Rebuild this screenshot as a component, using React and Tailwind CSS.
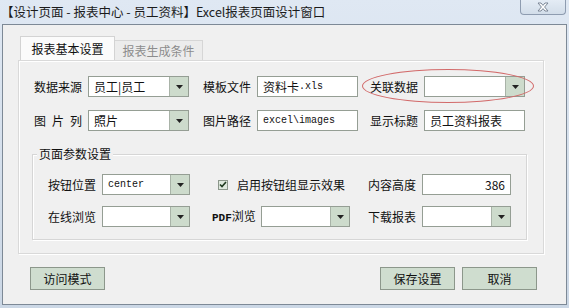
import React from 'react'

const cjk = { fontFamily: '"Noto Sans CJK SC", "Noto Sans", sans-serif' }
const mono = { fontFamily: '"Liberation Mono", "Noto Sans CJK SC", monospace' }

function Arrow() {
  return (
    <div className="w-[19px] h-full bg-[#cddbcc] border-l border-[#a9b3a8] flex items-center justify-center">
      <svg width="7" height="4" viewBox="0 0 7 4"><path d="M0 0h7L3.5 4z" fill="#222" /></svg>
    </div>
  )
}

function Combo({ w, children, monoText }) {
  return (
    <div className="h-[21px] bg-white border border-[#959e94] flex items-stretch" style={{ width: w }}>
      <div className={`flex-1 flex items-center pl-[5px] text-[#111] ${monoText ? 'text-[10px]' : 'text-[12px]'}`} style={monoText ? mono : cjk}>
        {children}
      </div>
      <Arrow />
    </div>
  )
}

function Field({ w, children, right, monoText }) {
  return (
    <div className={`h-[21px] bg-white border border-[#959e94] flex items-center px-[5px] text-[#111] ${right ? 'justify-end' : ''} ${monoText ? 'text-[10px]' : 'text-[12px]'}`} style={{ width: w, ...(monoText ? mono : cjk) }}>
      {children}
    </div>
  )
}

function Label({ w = 54, children }) {
  return <div className="text-[12px] text-[#111] shrink-0" style={{ width: w, ...cjk }}>{children}</div>
}

function Btn({ children }) {
  return (
    <button className="w-[75px] h-[23px] bg-[#cfddcf] border border-[#8c978b] text-[12px] text-[#111] flex items-center justify-center" style={cjk}>
      {children}
    </button>
  )
}

export default function App() {
  return (
    <div className="w-[569px] h-[308px] bg-gradient-to-b from-[#dfe8f3] to-[#cbd7e5] overflow-hidden" style={cjk}>
      {/* title bar */}
      <div className="h-[24px] flex items-start justify-between">
        <div className="text-[12.5px] text-[#1b1b1b] pl-[1px] pt-[3px] whitespace-nowrap">
          【设计页面 - 报表中心 - 员工资料】Excel报表页面设计窗口
        </div>
        <div className="w-[46px] h-[15px] mr-[3px] border border-t-0 border-[#8e9cb0] rounded-b-[4px] bg-gradient-to-b from-[#e4ecf5] to-[#d2dde9] flex items-center justify-center">
          <svg width="12" height="10" viewBox="0 0 12 10">
            <path d="M1 1h3l2 2.4L8 1h3L7.6 5 11 9H8L6 6.6 4 9H1l3.4-4z" fill="#fff" stroke="#6f7c8c" strokeWidth="0.9" />
          </svg>
        </div>
      </div>

      {/* window body */}
      <div className="mx-[2px] h-[281px] bg-[#f0f0f0] border border-[#7d8996] pt-[12px]">
        {/* tabs */}
        <div className="flex items-end ml-[17px] h-[23px] relative z-10">
          <div className="w-[95px] h-[24px] bg-[#fbfbfb] border border-[#d3d3d3] border-b-0 flex items-center justify-center text-[12px] text-[#111]">
            报表基本设置
          </div>
          <div className="w-[88px] h-[20px] bg-[#ececec] border border-[#d6d6d6] border-b-0 border-l-0 flex items-center justify-center text-[12px] text-[#8c8c8c]">
            报表生成条件
          </div>
        </div>

        {/* panel */}
        <div className="ml-[15px] w-[526px] h-[194px] border border-[#d9d9d9] bg-[#f0f0f0] shadow-[inset_1px_1px_0_#fff,1px_1px_0_#fff] pt-[15px] pl-[15px]">
          <div className="flex items-center h-[21px]">
            <Label>数据来源</Label>
            <Combo w={101}>员工|员工</Combo>
            <div className="w-[14px]" />
            <Label>模板文件</Label>
            <Field w={101}>资料卡<span className="text-[10px]" style={mono}>.xls</span></Field>
            <div className="w-[12px]" />
            <div className="relative flex items-center">
              <div className="absolute left-[-8px] top-[-7px] w-[172px] h-[34px] rounded-[50%] border border-[#d26a6a] pointer-events-none" />
              <Label>关联数据</Label>
              <Combo w={101}></Combo>
            </div>
          </div>

          <div className="flex items-center h-[21px] mt-[13px]">
            <div className="w-[54px] shrink-0">
              <div className="w-[48px] flex justify-between text-[12px] text-[#111]"><span>图</span><span>片</span><span>列</span></div>
            </div>
            <Combo w={101}>照片</Combo>
            <div className="w-[14px]" />
            <Label>图片路径</Label>
            <Field w={101} monoText>excel\images</Field>
            <div className="w-[12px]" />
            <Label>显示标题</Label>
            <Field w={101}>员工资料报表</Field>
          </div>

          {/* group box */}
          <div className="relative ml-[-2px] mt-[23px] w-[495px] h-[86px] border border-[#d6d6d6] shadow-[inset_1px_1px_0_#fff,1px_1px_0_#fff] pt-[19px] pl-[15px]">
            <div className="absolute left-[4px] top-[-10px] px-[2px] bg-[#f0f0f0] text-[12px] text-[#111]">页面参数设置</div>

            <div className="flex items-center h-[21px]">
              <Label>按钮位置</Label>
              <Combo w={88} monoText>center</Combo>
              <div className="w-[28px]" />
              <div className="w-[10px] h-[10px] border border-[#8c978b] bg-[#dfe9de] flex items-center justify-center">
                <svg width="8" height="7" viewBox="0 0 8 7"><path d="M1 3.5L3 5.5 7 1" fill="none" stroke="#1f3a1f" strokeWidth="1.6" /></svg>
              </div>
              <div className="ml-[9px] w-[131px] text-[12px] text-[#111]">启用按钮组显示效果</div>
              <Label>内容高度</Label>
              <Field w={89} right>386</Field>
            </div>

            <div className="flex items-center h-[21px] mt-[11px]">
              <Label>在线浏览</Label>
              <Combo w={88}></Combo>
              <div className="w-[22px]" />
              <div className="w-[49px] shrink-0 text-[12px] text-[#111]">
                <span className="text-[11px] font-bold" style={mono}>PDF</span>浏览
              </div>
              <Combo w={89}></Combo>
              <div className="w-[18px]" />
              <Label>下载报表</Label>
              <Combo w={89}></Combo>
            </div>
          </div>
        </div>

        {/* buttons */}
        <div className="flex items-center mt-[13px] pl-[27px] pr-[29px]">
          <Btn>访问模式</Btn>
          <div className="flex-1" />
          <Btn>保存设置</Btn>
          <div className="w-[7px]" />
          <Btn>取消</Btn>
        </div>
      </div>
    </div>
  )
}
